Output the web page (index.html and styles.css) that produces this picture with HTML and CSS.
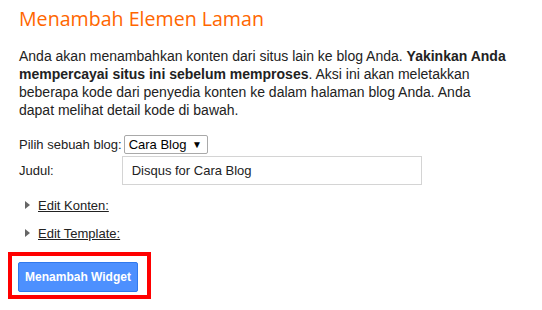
FILE: index.html
```html
<!DOCTYPE html>
<html lang="id">
<head>
  <meta charset="UTF-8">
  <meta name="viewport" content="width=device-width, initial-scale=1.0">
  <title>Menambah Elemen Laman</title>
  <link rel="stylesheet" href="styles.css">
</head>
<body>

  <h1>Menambah Elemen Laman</h1>

  <p class="intro">
    Anda akan menambahkan konten dari situs lain ke blog Anda. <b>Yakinkan Anda mempercayai situs ini sebelum memproses</b>. Aksi ini akan meletakkan beberapa kode dari penyedia konten ke dalam halaman blog Anda. Anda dapat melihat detail kode di bawah.
  </p>

  <div class="form">
    <label class="label">Pilih sebuah blog:</label>
    <div class="select">Cara Blog <span class="arrow">&#9660;</span></div>
    <label class="label">Judul:</label>
    <input class="title-input" type="text" value="Disqus for Cara Blog">
  </div>

  <!-- bagian yang bisa dibuka -->
  <div class="toggle"><span class="tri"></span><a href="#">Edit Konten:</a></div>
  <div class="toggle"><span class="tri"></span><a href="#">Edit Template:</a></div>

  <div class="highlight">
    <button class="btn">Menambah Widget</button>
  </div>

</body>
</html>
```

FILE: styles.css
```css
body {
  margin: 0;
  padding: 0 19px;
  font-family: Arial, "Liberation Sans", sans-serif;
  font-size: 13px;
  color: #222;
  background: #fff;
}
h1 {
  margin: 5px 0 0;
  font-family: "Open Sans", sans-serif;
  font-weight: normal;
  font-size: 19.6px;
  line-height: 28px;
  color: #f60;
}
.intro {
  margin: 14px 0 0;
  font-size: 14px;
  line-height: 18px;
  width: 488px;
}
.intro b {
  font-weight: bold;
}
.form {
  display: grid;
  grid-template-columns: auto auto;
  justify-content: start;
  align-items: center;
  row-gap: 2px;
  margin-top: 16px;
}
.select {
  margin-left: 2px;
  justify-self: start;
  box-sizing: border-box;
  height: 19px;
  padding: 0 5px 0 4px;
  border: 1px solid #a9a9a9;
  border-radius: 2px;
  line-height: 17px;
  font-size: 13px;
  color: #000;
}
.arrow {
  font-size: 10px;
  margin-left: 2px;
  vertical-align: 1px;
}
.title-input {
  box-sizing: border-box;
  width: 300px;
  height: 29px;
  margin: 0;
  padding: 0 9px;
  border: 1px solid #d4d4d4;
  font-family: Arial, "Liberation Sans", sans-serif;
  font-size: 13px;
  color: #222;
}
.toggle {
  display: flex;
  align-items: center;
  height: 28px;
  margin-top: 6px;
}
.toggle + .toggle {
  margin-top: 0;
}
.tri {
  width: 0;
  height: 0;
  margin: 0 8px 0 6px;
  border-top: 4.5px solid transparent;
  border-bottom: 4.5px solid transparent;
  border-left: 5px solid #666;
}
.toggle a {
  color: #222;
  text-decoration: underline;
}
.highlight {
  display: inline-block;
  margin: 5px 0 0 -11px;
  padding: 6px 9px 3px 6px;
  border: 4px solid #f00;
}
.btn {
  display: block;
  width: 120px;
  height: 30px;
  padding: 0;
  border: 1px solid #3079ed;
  border-radius: 2px;
  background: #4d90fe;
  color: #fff;
  font-family: Arial, "Liberation Sans", sans-serif;
  font-size: 12px;
  font-weight: bold;
  cursor: pointer;
}
```
